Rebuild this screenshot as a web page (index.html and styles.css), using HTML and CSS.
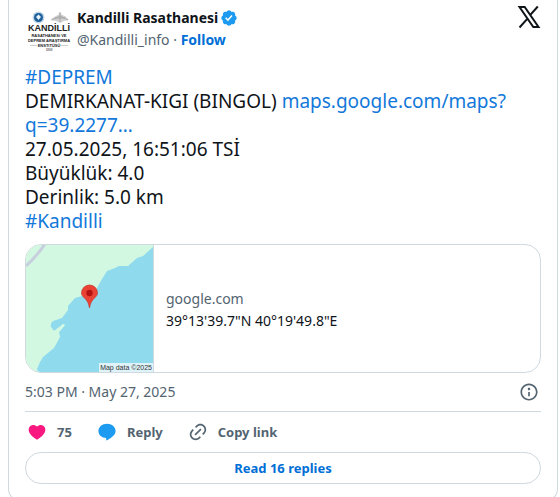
FILE: index.html
```
<!DOCTYPE html>
<html lang="tr">
<head>
    <meta charset="UTF-8">
    <meta name="viewport" content="width=device-width, initial-scale=1.0">
    <title>Kandilli Rasathanesi</title>
    <link rel="stylesheet" href="styles.css">
</head>
<body>
    <article class="tweet">
        <header class="tweet-header">
            <svg class="avatar" viewBox="0 0 48 48" role="img" aria-label="Kandilli">
                <circle cx="13.500" cy="12.500" r="6" fill="#c3d6e4"/>
                <circle cx="13.500" cy="12.500" r="4.500" fill="#1c5f9c"/>
                <path d="M11 12l2.500-2.500 2.500 2.500-2.500 3z" fill="#e8f3fa"/>
                <path d="M35 7l2 3 3 1 4 4-5 1-4 2-4-2-6-1 4-3 4-2z" fill="#d0d0d0"/>
                <path d="M35 7v10M30 13h10M27 15l8-4 8 4" fill="none" stroke="#929292" stroke-width=".6"/>
                <g text-anchor="middle" fill="#222">
                    <text x="24" y="26" class="logo-name">KANDİLLİ</text>
                    <text x="24" y="32" class="logo-line">RASATHANESİ VE</text>
                    <text x="24" y="37" class="logo-line">DEPREM ARAŞTIRMA</text>
                    <text x="24" y="42" class="logo-line">ENSTİTÜSÜ</text>
                    <text x="24" y="46" class="logo-year">1868</text>
                </g>
                <path d="M5 40.500h7M36 40.500h7" stroke="#999" stroke-width=".5"/>
            </svg>
            <div class="author">
                <div class="name">
                    <span>Kandilli Rasathanesi</span>
                    <svg class="verified" viewBox="0 0 22 22" aria-label="Verified account"><path fill="#1d9bf0" d="M20.396 11c-.018-.646-.215-1.275-.57-1.816-.354-.54-.852-.972-1.438-1.246.223-.607.27-1.264.14-1.897-.131-.634-.437-1.218-.882-1.687-.47-.445-1.053-.75-1.687-.882-.633-.13-1.290-.083-1.897.14-.273-.587-.704-1.086-1.245-1.440S11.647 1.620 11 1.604c-.646.017-1.273.213-1.813.568s-.969.854-1.240 1.440c-.608-.223-1.267-.272-1.902-.14-.635.130-1.220.436-1.690.882-.445.470-.749 1.055-.878 1.688-.130.633-.080 1.290.144 1.896-.587.274-1.087.705-1.443 1.245-.356.540-.555 1.170-.574 1.817.020.647.218 1.276.574 1.817.356.540.856.972 1.443 1.245-.224.606-.274 1.263-.144 1.896.130.634.433 1.218.877 1.688.470.443 1.054.747 1.687.878.633.132 1.290.084 1.897-.136.274.586.705 1.084 1.246 1.439.540.354 1.170.551 1.816.569.647-.016 1.276-.213 1.817-.567s.972-.854 1.245-1.440c.604.239 1.266.296 1.903.164.636-.132 1.220-.447 1.680-.907.460-.460.776-1.044.908-1.681s.075-1.299-.165-1.903c.586-.274 1.084-.705 1.439-1.246.354-.540.551-1.170.569-1.816zM9.662 14.850l-3.429-3.428 1.293-1.302 2.072 2.072 4.400-4.794 1.347 1.246z"/></svg>
                </div>
                <div class="handle">@Kandilli_info · <a class="follow" href="#">Follow</a></div>
            </div>
            <a class="x-logo" href="#" aria-label="View on X">
                <svg viewBox="0 0 24 24"><path fill="none" stroke="#0f1419" stroke-width="2" d="M2.500 2h5.200l13.800 20h-5.200zM20.800 1.500l-7.700 8.700M10.700 13.400L2.500 22.500"/></svg>
            </a>
        </header>

        <div class="tweet-text">
            <a href="#">#DEPREM</a><br>
            DEMIRKANAT-KIGI (BINGOL) <a href="#">maps.google.com/maps?<wbr>q=39.2277…</a><br>
            27.05.2025, 16:51:06 TSİ<br>
            Büyüklük: 4.0<br>
            Derinlik: 5.0 km<br>
            <a href="#">#Kandilli</a>
        </div>

        <a class="link-card" href="#">
            <div class="map">
                <svg viewBox="0 0 128 127" aria-hidden="true">
                    <rect width="128" height="127" fill="#d3f8e2"/>
                    <path d="M0 21Q10 12 19-1" fill="none" stroke="#c7cfdf" stroke-width="3"/>
                    <path d="M128 1L117 11L111 13L102 21H93L89 23L81 26L76 34L71 43L64 52L56 51L49 53L42 61V65L36 73L27 76Q24 78 25 82L28 86L37 79L39 80L33 87L34 92L28 103L17 112L14 117L11 124L12 127H128z" fill="#90daee"/>
                    <path d="M28 86L33 83L37 79L39 80L33 87z" fill="#d3f8e2"/>
                    <path d="M63.500 63c-1-5-2-7-5-10-2-2-3-3-3-5a8 8 0 0 1 16 0c0 2-1 3-3 5-3 3-4 5-5 10z" fill="#ea4335" stroke="#c5372c" stroke-width=".7"/>
                    <circle cx="63.500" cy="48" r="3.200" fill="#b31412"/>
                </svg>
                <span class="map-credit">Map data ©2025</span>
            </div>
            <div class="link-info">
                <span class="domain">google.com</span>
                <span>39°13'39.7"N 40°19'49.8"E</span>
            </div>
        </a>

        <div class="meta">
            <time datetime="2025-05-27T17:03">5:03 PM · May 27, 2025</time>
            <a class="info" href="#" aria-label="Info">
                <svg viewBox="0 0 24 24"><path fill="#536471" d="M13.500 8.500c0 .830-.670 1.500-1.500 1.500s-1.500-.670-1.500-1.500S11.170 7 12 7s1.500.670 1.500 1.500zM13 17v-5h-2v5h2zm-1 5.250c5.660 0 10.250-4.590 10.250-10.250S17.660 1.750 12 1.750 1.750 6.340 1.750 12 6.340 22.250 12 22.250zM20.250 12c0 4.560-3.690 8.250-8.250 8.250S3.750 16.560 3.750 12 7.440 3.750 12 3.750s8.250 3.690 8.250 8.250z"/></svg>
            </a>
        </div>

        <div class="actions">
            <button type="button">
                <svg viewBox="0 0 24 24"><path fill="#f91880" d="M20.884 13.190c-1.351 2.480-4.001 5.120-8.379 7.670l-.503.300-.504-.300c-4.379-2.550-7.029-5.190-8.382-7.670-1.360-2.500-1.410-4.860-.514-6.670.887-1.790 2.647-2.910 4.601-3.010 1.651-.090 3.368.560 4.798 2.010 1.429-1.450 3.146-2.100 4.796-2.010 1.954.100 3.714 1.220 4.601 3.010.896 1.810.846 4.170-.514 6.670z"/></svg>
                <span>75</span>
            </button>
            <button type="button">
                <svg viewBox="0 0 24 24"><path fill="#1d9bf0" d="M12 2C6.200 2 1.700 5.800 1.700 10.700c0 4.700 4.100 8.100 9.300 8.500v3.100c4.500-2.200 11.300-6.200 11.300-11.600C22.300 5.800 17.800 2 12 2z"/></svg>
                <span>Reply</span>
            </button>
            <button type="button">
                <svg viewBox="0 0 24 24"><path fill="#536471" d="M18.360 5.640c-1.950-1.960-5.110-1.960-7.070 0L9.880 7.050 8.460 5.640l1.420-1.420c2.730-2.730 7.160-2.730 9.900 0 2.730 2.740 2.730 7.170 0 9.900l-1.420 1.420-1.410-1.420 1.410-1.410c1.960-1.960 1.960-5.120 0-7.070zm-2.120 3.530l-7.070 7.070-1.410-1.410 7.070-7.070 1.410 1.410zm-12.020.710l1.420-1.420 1.410 1.420-1.410 1.410c-1.960 1.960-1.960 5.120 0 7.070 1.950 1.960 5.110 1.960 7.070 0l1.410-1.410 1.420 1.410-1.420 1.420c-2.730 2.730-7.160 2.730-9.900 0-2.730-2.740-2.730-7.170 0-9.900z"/></svg>
                <span>Copy link</span>
            </button>
        </div>

        <a class="replies" href="#">Read 16 replies</a>
    </article>
</body>
</html>
```
FILE: styles.css
```
* {
    box-sizing: border-box;
}
html {
    overflow: hidden;
}
body {
    margin: 0 2px 0 8px;
    background-color: #fff;
    color: #0f1419;
    font-family: "Noto Sans", "Open Sans", sans-serif;
    font-size: 14px;
    line-height: 20px;
}
a {
    color: #006fd6;
    text-decoration: none;
}
svg {
    display: block;
}
.tweet {
    max-width: 550px;
    padding: 5px 16px 16px;
    border: 1px solid #cfd9de;
    border-top: none;
    border-radius: 0 0 12px 12px;
}
.tweet-header {
    display: flex;
    align-items: flex-start;
}
.avatar {
    width: 48px;
    height: 48px;
    margin-right: 4px;
    font-family: "Liberation Sans", Arial, sans-serif;
}
.logo-name {
    font-size: 9px;
    font-weight: 700;
}
.logo-line {
    font-size: 4px;
    font-weight: 700;
}
.logo-year {
    font-size: 3px;
}
.author {
    flex: 1;
    padding-top: 2px;
    line-height: 22px;
}
.name {
    display: flex;
    align-items: center;
    gap: 2px;
    font-weight: 700;
}
.verified {
    width: 18px;
    height: 18px;
}
.handle {
    color: #536471;
}
.follow {
    font-weight: 700;
}
.x-logo svg {
    width: 24px;
    height: 24px;
}
.tweet-text {
    margin-top: 12px;
    font-size: 19px;
    line-height: 24px;
}
.tweet-text a {
    color: #1278da;
}
.link-card {
    display: flex;
    margin-top: 11px;
    border: 1px solid #cfd9de;
    border-radius: 16px;
    color: #0f1419;
    overflow: hidden;
}
.map {
    position: relative;
    width: 128px;
    border-right: 1px solid #cfd9de;
    overflow: hidden;
}
.map svg {
    width: 128px;
    height: 127px;
}
.map-credit {
    position: absolute;
    right: 0;
    bottom: 0;
    padding: 0 1px;
    background-color: rgba(255, 255, 255, 0.7);
    color: #333;
    font-family: "Liberation Sans", Arial, sans-serif;
    font-size: 7px;
    line-height: 9px;
}
.link-info {
    display: flex;
    flex: 1;
    flex-direction: column;
    justify-content: center;
    padding: 2px 12px 0;
    line-height: 22px;
}
.domain {
    color: #536471;
}
.meta {
    display: flex;
    align-items: center;
    justify-content: space-between;
    height: 39px;
    color: #536471;
    border-bottom: 1px solid #cfd9de;
}
.info svg {
    width: 20px;
    height: 20px;
    margin-right: 2px;
}
.actions {
    display: flex;
    gap: 25px;
    height: 40px;
    padding-left: 2px;
}
.actions button {
    display: flex;
    align-items: center;
    gap: 10px;
    padding: 0;
    border: none;
    background: none;
    color: #536471;
    font: inherit;
    font-size: 13px;
    font-weight: 700;
    cursor: pointer;
}
.actions svg {
    width: 20px;
    height: 20px;
}
.replies {
    display: block;
    border: 1px solid #cfd9de;
    border-radius: 16px;
    font-size: 13px;
    font-weight: 700;
    line-height: 30px;
    text-align: center;
}
```
